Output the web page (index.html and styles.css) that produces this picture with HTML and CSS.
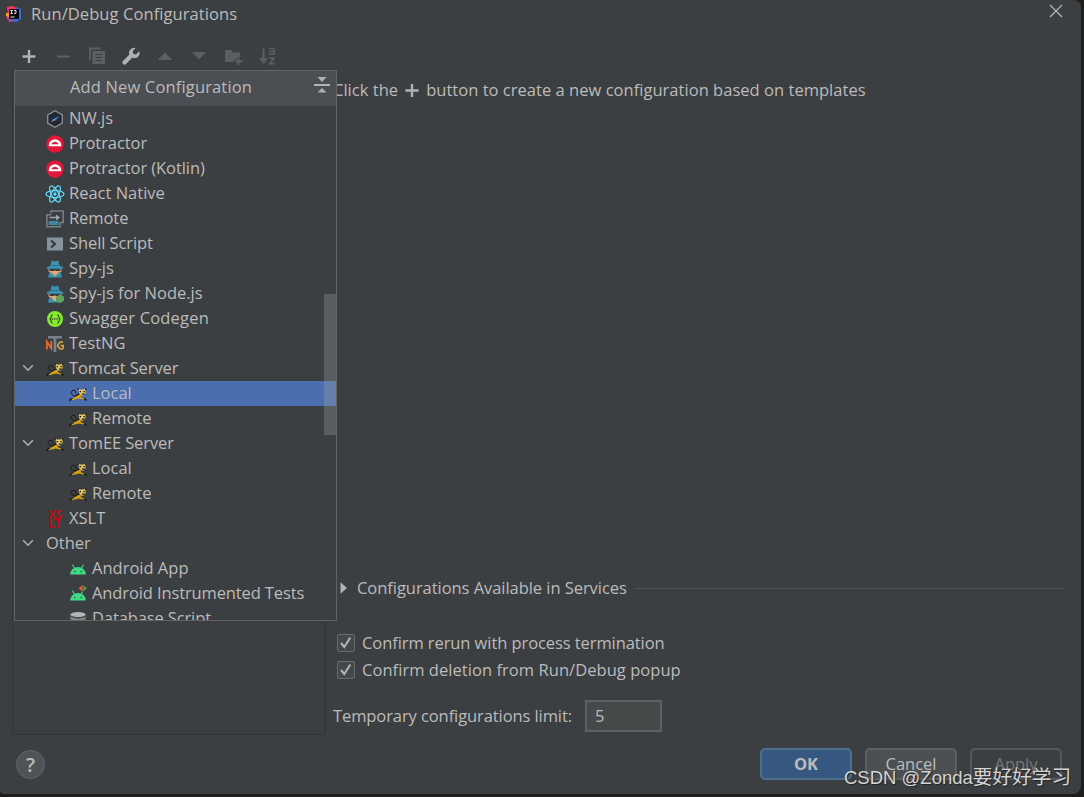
FILE: index.html
```html
<!DOCTYPE html>
<html lang="en">
<head>
<meta charset="utf-8">
<title>Run/Debug Configurations</title>
<link rel="stylesheet" href="styles.css">
</head>
<body>
<svg class="sprite" aria-hidden="true">
  <symbol id="plus" viewBox="0 0 18 18"><path d="M9 3v13M2.500 9.500h13" stroke="#afb1b3" stroke-width="2.400"/></symbol>
  <symbol id="chevron" viewBox="0 0 12 12"><path d="M1.200 3.200 6 8.200l4.800-5" fill="none" stroke="#afb1b3" stroke-width="1.500"/></symbol>
  <symbol id="nwjs" viewBox="0 0 18 18"><path d="M9 .8l7.300 4.100v8.200L9 17.200l-7.300-4.100V4.900z" fill="#23262e" stroke="#8d9298" stroke-width="1.300"/><path d="M9 3l5.400 3v6L9 15l-5.400-3V6z" fill="#222a38"/><path d="M13.800 5.800 10 10 8 8.500z" fill="#2f7fd6"/><path d="M4.500 12 8 8.500l2 1.500z" fill="#8f99a4"/></symbol>
  <symbol id="protractor" viewBox="0 0 18 18"><circle cx="9" cy="9" r="8.700" fill="#e3173a"/><path d="M2.800 11.200V10a6.200 5.800 0 0 1 12.400 0v1.200z" fill="#fff"/><path d="M5.300 9.200a3.800 3.300 0 0 1 7.400 0z" fill="#d81b3a"/></symbol>
  <symbol id="react" viewBox="0 0 20 18"><g fill="none" stroke="#61dafb" stroke-width="1.250"><ellipse cx="10" cy="9" rx="9" ry="3.500"/><ellipse cx="10" cy="9" rx="9" ry="3.500" transform="rotate(60 10 9)"/><ellipse cx="10" cy="9" rx="9" ry="3.500" transform="rotate(120 10 9)"/></g><circle cx="10" cy="9" r="1.700" fill="#61dafb"/></symbol>
  <symbol id="remote" viewBox="0 0 18 18"><path d="M5 3.500V1h12.200v11.500H15" fill="none" stroke="#77828a" stroke-width="1.500"/><path d="M5 4.800H.9v12h13.200V12" fill="none" stroke="#77828a" stroke-width="1.500"/><path d="M3.500 6.700H10V4.500L14 7.500l-4 3V8.300H3.500z" fill="#9aa7b0"/><path d="M2.700 11h9.800v4H2.700z" fill="#3e86a0"/></symbol>
  <symbol id="shell" viewBox="0 0 18 18"><path d="M1 2.500h16v13H1z" fill="#87939a"/><path d="m5 5.500 4 3.500-4 3.500" fill="none" stroke="#30363a" stroke-width="2"/></symbol>
  <symbol id="spy" viewBox="0 0 18 18"><path d="M2 17.500 3.500 12l5.500 3 5.500-3 1.500 5.500z" fill="#3b91b2"/><path d="M2.500 9h13v2.500L12.500 13 9 16.500 5.500 13l-3-1.500z" fill="#e0a77c"/><path d="M3.500 9h11v2H10l-1-.7-1 .7H3.500z" fill="#343a3d"/><path d="M4.500 5.500 5.800.5 9 1.500l3.200-1 1.300 5 3.700 1.800v1.400H.8V7.300z" fill="#3b91b2"/><path d="M4.500 5.500h9" stroke="#286b87" stroke-width=".8"/></symbol>
  <symbol id="spynode" viewBox="0 0 18 18"><use href="#spy" width="18" height="18"/><path d="m14 9.500 4 2.200v4.100L14 18l-4-2.200v-4.100z" fill="#5fa45b"/></symbol>
  <symbol id="swagger" viewBox="0 0 18 18"><circle cx="9" cy="9" r="8" fill="#84ea2c"/><path d="M6.700 4.700c-2 0-1 3-2.600 4.300 1.600 1.300.6 4.300 2.600 4.300M11.300 4.700c2 0 1 3 2.600 4.300-1.600 1.300-.6 4.300-2.600 4.300" fill="none" stroke="#28441d" stroke-width="1.100"/><path d="M6 9h6.500" stroke="#28441d" stroke-width="1.300" stroke-dasharray="1.200 1"/></symbol>
  <symbol id="testng" viewBox="0 0 18 18"><path d="M2 1h14v2.500h-5.600V17H7.600V3.500H2z" fill="#77838b"/><path d="M.9 14.500V6.500L5.300 13.500V6" fill="none" stroke="#e46b2c" stroke-width="1.800"/><path d="M17 7.500a3.200 3.500 0 1 0 .1 5.800V10.600h-2.500" fill="none" stroke="#d2a04a" stroke-width="1.700"/></symbol>
  <symbol id="tomcat" viewBox="0 0 18 18"><path d="M5.500 10.500C1 10 1.500 5.800 4 5.300s3 1.500 2.500 3" fill="none" stroke="#171819" stroke-width="1"/><path d="M.5 15.500 3.500 13.500M14.500 13.500l3 1.700" stroke="#17181a" stroke-width="1.600"/><path d="M2.500 14.500C5.500 13.700 6 10.500 9 9.800l3.500.5-1 1.600 4.500 2-1.500.6-4.600-1.100-3 .8-4.200 1z" fill="#d4a20e"/><path d="M4.500 11.500 9.500 8l1 1.400-4 2.300z" fill="#242015"/><path d="m9 3.300 2 1.200h3.500l2.200-1.200-.2 5-2.500 2.700-3.500-1.700z" fill="#e4c163"/><path d="M9.300 3v2.200M16.700 3v2.200" stroke="#17181a"/><path d="M10.600 6.700H12M14.400 6.700h1.400M13 9.200h2.600" stroke="#17181a" stroke-width="1.300"/></symbol>
  <symbol id="xslt" viewBox="0 0 18 18"><text x="2.500" y="8.600" textLength="13" lengthAdjust="spacingAndGlyphs" class="xslt-letters">XS</text><text x="3" y="18" textLength="12" lengthAdjust="spacingAndGlyphs" class="xslt-letters">LT</text></symbol>
  <symbol id="android" viewBox="0 0 18 18"><path d="M1.200 14.500a7.800 7.500 0 0 1 15.600 0z" fill="#3ddc84"/><path d="m3.500 4.500 2 4m9-4-2 4" stroke="#3ddc84" stroke-width="1.100"/><path d="M5 11.500h1.500m5 0H13" stroke="#315d47" stroke-width="1.400"/></symbol>
  <symbol id="androidtest" viewBox="0 0 18 18"><path d="M1.200 15.500a7.800 7.500 0 0 1 15.600 0z" fill="#3ddc84"/><path d="m3.500 5.500 2 4m8-3-1 3" stroke="#3ddc84" stroke-width="1.100"/><path d="M5 12.500h1.500m5 0H13" stroke="#315d47" stroke-width="1.400"/><path d="M13.500 0v6.500l-4-3.200z" fill="#e46135"/><path d="m14.200 0 3.800 3.300-3.800 3.200z" fill="#579b40"/></symbol>
  <symbol id="database" viewBox="0 0 18 18"><path d="M1.500 4.500v10h15v-10" fill="#85898b"/><ellipse cx="9" cy="4.500" rx="7.500" ry="2.600" fill="#b2b5b7"/><path d="M1.500 6q7.500 4 15 0M1.500 10q7.500 4 15 0" fill="none" stroke="#3c3f41" stroke-width="1.400"/><path d="M10 10.500h6" stroke="#558c50" stroke-width="1.500"/></symbol>
</svg>

<main class="dialog">
  <header class="titlebar">
    <svg class="app-icon" viewBox="0 0 16 16"><path d="M1 1 7 0l5 3-3 12-6 1z" fill="#fe315d"/><path d="M0 8h7l-2 7-4-2z" fill="#d439a8"/><path d="M0 7h3v4L0 10z" fill="#f99b2a"/><path d="m10 1 5 2v10l-5 3-6-1 6-4z" fill="#3d69d9"/><path d="M3 3h10v10H3z" fill="#08080a"/><path d="M4.500 4.500h2.200M5.600 4.500v3M4.500 7.500h2.200M8 4.500h2v2.800H8M4.500 11h4" fill="none" stroke="#fff" stroke-width=".9"/></svg>
    <h1 class="title">Run/Debug Configurations</h1>
    <svg class="close" viewBox="0 0 14 14"><path d="m1 1 12 12M13 1 1 13" stroke="#b5b7b8" stroke-width="1.200"/></svg>
  </header>

  <nav class="toolbar">
    <svg viewBox="0 0 18 18"><use href="#plus"/></svg>
    <svg viewBox="0 0 18 18"><path d="M3 9.500h12.500" stroke="#5c5e60" stroke-width="2.200"/></svg>
    <svg viewBox="0 0 18 18"><path d="M2 13V1.500h10.500" fill="none" stroke="#5c5e60" stroke-width="1.800"/><path d="M4.500 4H17v13H4.500z" fill="#5c5e60"/><path d="M7.500 7.500H14M7.500 10.500H14M7.500 13.500H14" stroke="#3c3f41" stroke-width="1.200"/></svg>
    <svg viewBox="0 0 18 18"><path d="M17.300 4.300 14 7.500l-2.600-.6-.8-2.700L13.500 1A5 5 0 0 0 7.400 7.600L1 14a2.100 2.100 0 0 0 3 3l6.500-6.400a5 5 0 0 0 6.800-6.300z" fill="#afb1b3"/></svg>
    <svg viewBox="0 0 18 18"><path d="m9 5.500 7.300 7.500H1.700z" fill="#5c5e60"/></svg>
    <svg viewBox="0 0 18 18"><path d="M9 12.500 1.700 5h14.600z" fill="#5c5e60"/></svg>
    <svg class="overhang" viewBox="0 0 18 18"><path d="M1 3h6l2 2.500h7V10h-3v2.500h-3V15H1z" fill="#5c5e60"/><path d="M14.500 10.500v7.500M11 14.200h8" stroke="#5c5e60" stroke-width="2"/></svg>
    <div class="sort">
      <svg viewBox="0 0 10 18"><path d="M5.500 1.500V12" stroke="#5c5e60" stroke-width="2"/><path d="M1 11h9l-4.500 6z" fill="#5c5e60"/></svg>
      <svg viewBox="0 0 8 18"><path d="M1.300 2.200Q6.300.2 6.300 3.600V8M6.300 4.400Q1.200 4 1.300 6.100c.1 2 3.700 1.800 5-.4M1.200 11.200h5L1.500 16.700h5.200" fill="none" stroke="#5c5e60" stroke-width="1.500"/></svg>
    </div>
  </nav>

  <section class="content">
    <div class="tree-panel"></div>
    <div class="details">
      <p class="hint"><span>Click the</span><svg><use href="#plus"/></svg><span class="hint-rest">button to create a new configuration based on templates</span></p>
      <div class="services">
        <svg viewBox="0 0 8 12"><path d="m.5.200 6.500 5.800-6.500 5.800z" fill="#afb1b3"/></svg>
        <span class="services-label">Configurations Available in Services</span><i></i>
      </div>
      <div class="checks">
        <label><span class="box"><svg viewBox="0 0 16 16"><path d="m3 8 3.300 4 6-9.500" fill="none" stroke="#b0b2b3" stroke-width="2.100"/></svg></span><span class="check-one">Confirm rerun with process termination</span></label>
        <label><span class="box"><svg viewBox="0 0 16 16"><path d="m3 8 3.300 4 6-9.500" fill="none" stroke="#b0b2b3" stroke-width="2.100"/></svg></span><span class="check-two">Confirm deletion from Run/Debug popup</span></label>
      </div>
      <div class="limit"><span class="limit-label">Temporary configurations limit:</span><span class="field">5</span></div>
    </div>
  </section>

  <footer class="footer">
    <div class="help">?</div>
    <div class="buttons"><div class="button ok">OK</div><div class="button">Cancel</div><div class="button disabled">Apply</div></div>
  </footer>

  <aside class="popup">
    <div class="popup-head"><span>Add New Configuration</span><svg viewBox="0 0 16 16"><path d="M0 8h16" stroke="#afb1b3" stroke-width="2"/><path d="M3.500 0h9L8 5zM8 11l4.500 4.500h-9z" fill="#afb1b3"/></svg></div>
    <ul class="list">
      <li><svg class="icon"><use href="#nwjs"/></svg>NW.js</li>
      <li class="snug"><svg class="icon"><use href="#protractor"/></svg>Protractor</li>
      <li class="snug"><svg class="icon"><use href="#protractor"/></svg>Protractor (Kotlin)</li>
      <li><svg class="icon wide"><use href="#react"/></svg>React Native</li>
      <li class="snug"><svg class="icon"><use href="#remote"/></svg>Remote</li>
      <li class="snug"><svg class="icon"><use href="#shell"/></svg>Shell Script</li>
      <li><svg class="icon"><use href="#spy"/></svg>Spy-js</li>
      <li><svg class="icon"><use href="#spynode"/></svg>Spy-js for Node.js</li>
      <li class="loose"><svg class="icon"><use href="#swagger"/></svg>Swagger Codegen</li>
      <li><svg class="icon"><use href="#testng"/></svg>TestNG</li>
      <li class="group tight"><svg class="arrow"><use href="#chevron"/></svg><svg class="icon"><use href="#tomcat"/></svg>Tomcat Server</li>
      <li class="child selected"><svg class="icon"><use href="#tomcat"/></svg>Local</li>
      <li class="child snug"><svg class="icon"><use href="#tomcat"/></svg>Remote</li>
      <li class="group tight"><svg class="arrow"><use href="#chevron"/></svg><svg class="icon"><use href="#tomcat"/></svg>TomEE Server</li>
      <li class="child"><svg class="icon"><use href="#tomcat"/></svg>Local</li>
      <li class="child snug"><svg class="icon"><use href="#tomcat"/></svg>Remote</li>
      <li><svg class="icon"><use href="#xslt"/></svg>XSLT</li>
      <li class="group"><svg class="arrow"><use href="#chevron"/></svg>Other</li>
      <li class="child"><svg class="icon"><use href="#android"/></svg>Android App</li>
      <li class="child tight"><svg class="icon"><use href="#androidtest"/></svg>Android Instrumented Tests</li>
      <li class="child tight"><svg class="icon"><use href="#database"/></svg>Database Script</li>
    </ul>
    <div class="scroll-thumb"></div>
  </aside>
  <div class="watermark">CSDN @Zonda<span>要好好学习</span></div>
</main>
</body>
</html>
```
FILE: styles.css
```css
* { box-sizing: border-box; }
body {
  margin: 0;
  height: 797px;
  overflow: hidden;
  background: #1f1e1f;
  color: #bbbbbb;
  font: 16.5px/24px "Open Sans", "Noto Sans CJK SC", sans-serif;
  white-space: nowrap;
}
.sprite { position: absolute; width: 0; height: 0; }
svg { flex: none; display: block; }
.dialog {
  position: relative;
  display: flex;
  flex-direction: column;
  width: 1081px;
  height: 794px;
  background: #3c3f41;
  border-radius: 0 7px 8px 4px;
}
.titlebar { display: flex; height: 28px; padding: 0 18px 0 6px; }
.app-icon { width: 16px; height: 16px; margin-top: 6px; }
.title { margin: 2px 0 0 9px; font: inherit; letter-spacing: .08px; }
.close { width: 14px; height: 14px; margin: 4px 0 0 auto; }
.toolbar { display: flex; gap: 16px; height: 42px; padding: 19px 0 0 20px; }
.toolbar > svg { width: 18px; height: 18px; }
.toolbar .overhang { overflow: visible; }
.sort { display: flex; gap: 0; }
.sort svg { height: 18px; }
.sort svg:first-child { width: 10px; }
.sort svg:last-child { width: 8px; }

.content { display: flex; height: 665px; padding: 0 16px 0 12px; }
.tree-panel { width: 314px; border: 1px solid #323334; }
.details { flex: 1; display: flex; flex-direction: column; padding-left: 7px; }
.hint { display: flex; align-items: center; height: 24px; margin: 8px 0 0; letter-spacing: .03px; }
.hint svg { width: 18px; height: 18px; margin: 0 5px 0 5px; }
.services { display: flex; align-items: center; height: 24px; margin-top: 474px; padding-left: 7px; }
.services svg { width: 8px; height: 12px; margin-right: 9px; }
.services i { flex: 1; height: 1px; margin-left: 8px; background: #515456; }
.services-label { letter-spacing: -.05px; }
.checks { display: flex; flex-direction: column; gap: 3px; margin-top: 31px; padding-left: 3.500px; }
.checks label { display: flex; align-items: center; gap: 7.500px; height: 24px; }
.check-one { letter-spacing: -.08px; }
.check-two { letter-spacing: .05px; }
.box { width: 18px; height: 18px; border: 1px solid #6b6b6b; border-radius: 2px; background: #43494a; }
.box svg { width: 16px; height: 16px; }
.limit { display: flex; align-items: center; gap: 12px; height: 32px; margin-top: 18px; }
.limit-label { width: 240px; letter-spacing: -.09px; }
.field { width: 77px; height: 32px; padding: 2px 8px; border: 2px solid #5e6162; background: #45494a; }

.footer { display: flex; justify-content: space-between; height: 59px; padding: 13px 19px 0 16px; }
.help {
  width: 29px; height: 29px; margin-top: 2px;
  border: 1px solid #646768; border-radius: 50%;
  background: #4f5356; font-size: 20px; font-weight: 600; line-height: 27px; text-align: center;
}
.buttons { display: flex; gap: 13px; }
.button {
  width: 92px; height: 32px;
  border: 2px solid #5c6061; border-radius: 5px;
  background: #4c5052; line-height: 28px; text-align: center;
}
.ok { background: #365880; border-color: #4c708c; font-weight: 700; }
.disabled { background: transparent; border-color: #56595b; color: #777777; }

.popup {
  position: absolute; left: 14px; top: 70px;
  width: 323px; height: 551px; overflow: hidden;
  border: 1px solid #616364; background: #3c3f41;
}
.popup-head { display: flex; justify-content: space-between; height: 35px; padding: 4px 6px 0 55px; background: #4b4e52; letter-spacing: .15px; }
.popup-head svg { width: 16px; height: 16px; margin-top: 2px; }
.list { margin: 0; padding: 0; list-style: none; }
.list li { display: flex; align-items: center; height: 25px; padding: 0 0 2px 31px; }
.list .child { padding-left: 54px; }
.list .group { padding-left: 7px; }
.list .selected { background: #4b6eaf; }
.list .loose { letter-spacing: .18px; }
.list .snug { letter-spacing: -.08px; }
.list .tight { letter-spacing: -.12px; }
.icon { width: 18px; height: 18px; margin: 2px 5px 0 0; }
.icon.wide { width: 20px; margin: 2px 4px 0 -1px; }
.arrow { width: 12px; height: 12px; margin: 1px 12px 0 0; }
.xslt-letters { font: bold 11.500px "Open Sans", sans-serif; fill: #c00b0b; }
.scroll-thumb { position: absolute; right: 0; top: 223px; width: 12px; height: 141px; background: rgba(166, 166, 166, .3); }

.watermark {
  position: absolute; left: 844px; top: 764px;
  font: 18.5px/26px "Liberation Sans", "Noto Sans CJK SC", sans-serif;
  color: #d4d4d4; text-shadow: 1px 1px 1px #222222;
}
.watermark span { font-size: 19.700px; }
```
